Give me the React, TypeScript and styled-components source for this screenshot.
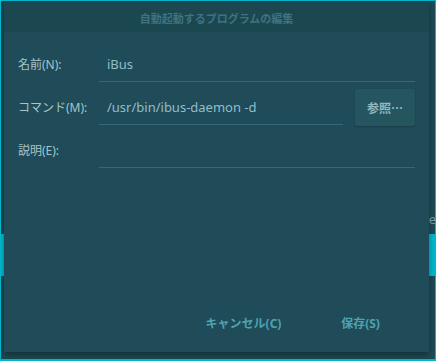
import React from "react";
import styled, { createGlobalStyle } from "styled-components";

const GlobalStyle = createGlobalStyle`
  html, body {
    margin: 0;
    padding: 0;
    background: #1d4a54;
  }
  * {
    box-sizing: border-box;
  }
`;

const FONT = `"Noto Sans", "Noto Sans CJK JP", sans-serif`;

export default function App() {
  return (
    <Screen>
      <GlobalStyle />
      <CornerIcon />
      <EdgeBar side="left" />
      <EdgeBar side="right" />
      <BehindText>e</BehindText>
      <Dialog>
        <Header>
          <Title>自動起動するプログラムの編集</Title>
        </Header>
        <Body>
          <Label>名前(N):</Label>
          <Field wide>
            <FieldText>iBus</FieldText>
          </Field>

          <Label>コマンド(M):</Label>
          <Field>
            <FieldText>/usr/bin/ibus-daemon -d</FieldText>
          </Field>
          <BrowseButton>参照⋯</BrowseButton>

          <Label>説明(E):</Label>
          <Field wide>
            <FieldText />
          </Field>
        </Body>
        <Footer>
          <FooterButton>キャンセル(C)</FooterButton>
          <FooterButton>保存(S)</FooterButton>
        </Footer>
      </Dialog>
    </Screen>
  );
}

const Screen = styled.div`
  position: relative;
  width: 436px;
  height: 361px;
  border: 1px solid #00b6cc;
  border-bottom-width: 2px;
  background: #1d4a54;
  padding: 0 6px 0 3px;
  overflow: hidden;
  font-family: ${FONT};
`;

// desktop things showing behind the dialog
const CornerIcon = styled.div`
  position: absolute;
  left: 5px;
  top: -1px;
  width: 18px;
  height: 3px;
  background: linear-gradient(90deg, #3a8fc0, #9fd6f0, #3a8fc0);
`;

const EdgeBar = styled.div<{ side: "left" | "right" }>`
  position: absolute;
  top: 233px;
  height: 42px;
  background: #00b6cc;
  ${(p) => (p.side === "left" ? "left: 0; width: 3px;" : "right: 0; width: 6px;")}
`;

const BehindText = styled.div`
  position: absolute;
  right: -1px;
  top: 209px;
  font-size: 13px;
  color: #7d9ea6;
`;

const Dialog = styled.div`
  position: relative;
  width: 425px;
  height: 351px;
  background: #1f4c58;
  display: flex;
  flex-direction: column;
  box-shadow: 0 3px 6px rgba(0, 0, 0, 0.35);
`;

const Header = styled.div`
  height: 31px;
  background: #1b4850;
  display: flex;
  align-items: center;
  justify-content: center;
`;

const Title = styled.div`
  font-size: 11px;
  font-weight: bold;
  color: #3f7282;
  padding-top: 2px;
`;

const Body = styled.div`
  flex: 1;
  display: grid;
  grid-template-columns: 69px 244px 60px;
  column-gap: 12px;
  row-gap: 7px;
  grid-auto-rows: 36px;
  align-content: start;
  padding: 14px 0 0 14px;
`;

const Label = styled.div`
  display: flex;
  align-items: center;
  font-size: 12px;
  color: #a6c4cb;
  white-space: nowrap;
`;

const Field = styled.div<{ wide?: boolean }>`
  grid-column: ${(p) => (p.wide ? "2 / span 2" : "2")};
  display: flex;
  align-items: center;
  padding: 0 0 0 8px;
  border-bottom: 1px solid #386775;
`;

const FieldText = styled.span`
  font-size: 13px;
  color: #93bccb;
`;

const BrowseButton = styled.div`
  display: flex;
  align-items: center;
  justify-content: center;
  height: 37px;
  background: #25565f;
  border-radius: 3px;
  box-shadow: 0 1px 2px rgba(0, 0, 0, 0.2);
  font-size: 12px;
  font-weight: bold;
  color: #93b8c1;
`;

const Footer = styled.div`
  display: flex;
  justify-content: flex-end;
  padding: 0 10px 11px 0;
`;

const FooterButton = styled.div`
  width: 117px;
  height: 36px;
  display: flex;
  align-items: center;
  justify-content: center;
  font-size: 12px;
  font-weight: bold;
  color: #4fa2b0;
`;
